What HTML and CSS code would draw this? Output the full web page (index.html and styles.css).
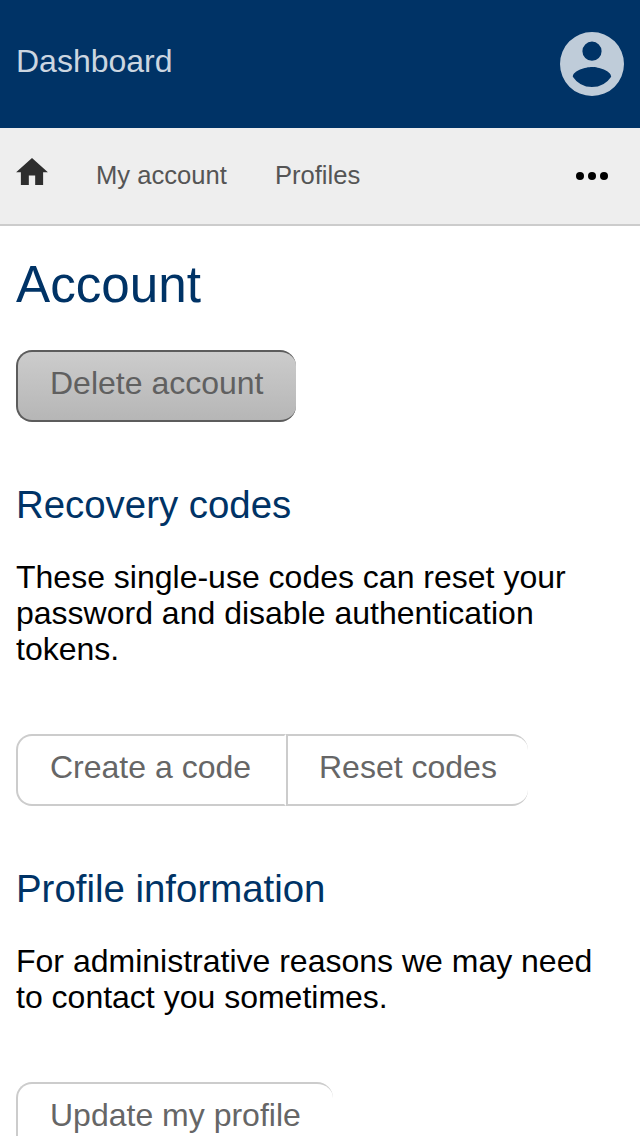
FILE: index.html
```
<!DOCTYPE html>
<html lang="en">
<head>
<meta charset="utf-8">
<title>Account</title>
<link rel="stylesheet" href="styles.css">
</head>
<body>
<header class="topbar">
<span class="brand">Dashboard</span>
<svg class="avatar" viewBox="2 2 20 20"><path fill-rule="evenodd" d="M12 2a10 10 0 1 0 0 20 10 10 0 0 0 0-20zm0 3a3 3 0 1 1 0 6 3 3 0 0 1 0-6zm0 14.2a7.2 7.2 0 0 1-6-3.22c.03-1.99 4-3.08 6-3.08s5.97 1.09 6 3.08a7.2 7.2 0 0 1-6 3.22z"/></svg>
</header>
<nav class="nav">
<svg class="home" viewBox="2 3 20 17"><path d="M10 20v-6h4v6h5v-8h3L12 3 2 12h3v8z"/></svg>
<a class="link">My account</a>
<a class="link">Profiles</a>
<svg class="more" viewBox="0 0 32 8"><circle cx="4" cy="4" r="4"/><circle cx="16" cy="4" r="4"/><circle cx="28" cy="4" r="4"/></svg>
</nav>
<main class="content">
<h1 class="title">Account</h1>
<div class="group"><button class="btn danger">Delete account</button></div>
<h2 class="heading">Recovery codes</h2>
<p class="text">These single-use codes can reset your password and disable authentication tokens.</p>
<div class="group"><button class="btn create">Create a code</button><button class="btn reset">Reset codes</button></div>
<h2 class="heading">Profile information</h2>
<p class="text">For administrative reasons we may need to contact you sometimes.</p>
<div class="group"><button class="btn">Update my profile</button></div>
</main>
</body>
</html>
```
FILE: styles.css
```
* { box-sizing: border-box; }
body { margin: 0; height: 1136px; overflow: hidden; background: #fff; color: #000; font: 32px/36px "Liberation Sans", Arial, sans-serif; }
.topbar { height: 128px; background: #003366; padding: 0 16px; display: flex; align-items: center; justify-content: space-between; }
.brand { color: #ccd6e0; padding-bottom: 6px; }
.avatar { width: 64px; height: 64px; fill: #bfccd9; }
.nav { height: 98px; background: #eee; border-bottom: 2px solid #ccc; padding: 0 32px 0 16px; display: flex; align-items: center; }
.home { width: 32px; height: 27px; fill: #2e2e2e; margin: 0 48px 9px 0; }
.link { font-size: 25.6px; color: #555; margin-right: 48px; padding-bottom: 2px; }
.more { width: 32px; height: 8px; margin-left: auto; }
.content { padding: 0 16px; }
.title { margin: 30px 0 36px; font-size: 51.2px; line-height: 58px; font-weight: 400; color: #003366; }
.heading { margin: 60px 0 31px; font-size: 38.4px; line-height: 46px; font-weight: 400; color: #003366; }
.text { margin: 0 0 67px; }
.group { display: flex; }
.btn { height: 72px; margin: 0; padding: 0 32px 6px; border: 2px solid #ccc; border-right-width: 0; background: #fff; color: #666; font: inherit; text-align: left; }
.btn:first-child { border-radius: 16px 0 0 16px; }
.btn:not(:last-child) { border-right: 2px solid transparent; }
.btn:last-child { border-radius: 0 16px 16px 0; }
.btn:only-child { border-radius: 16px; }
.create { width: 270px; }
.reset { width: 242px; padding: 0 30px 6px 31px; }
.danger { width: 280px; border-color: #5c5c5c; background: linear-gradient(#ccc, #b6b6b6); color: #606060; }
```
